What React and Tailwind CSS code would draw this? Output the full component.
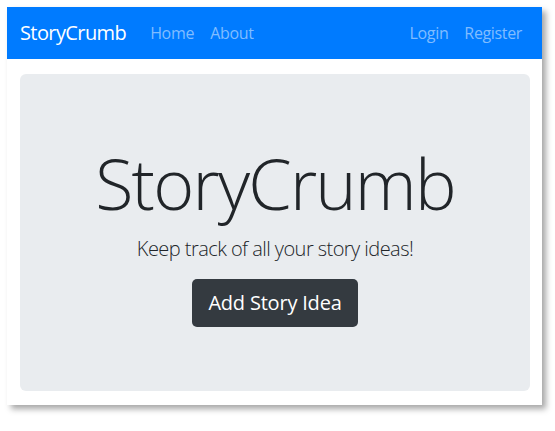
import React from 'react'

const App = () => {
    return (
        <div className="min-h-screen bg-white p-[7px]" style={{ fontFamily: '"Open Sans", "Noto Sans", sans-serif' }}>
            <div className="w-[535px] h-[398px] bg-white shadow-[4px_4px_6px_rgba(0,0,0,0.35)]">
                {/* Navbar */}
                <nav className="h-[52px] bg-[#007bff] flex items-center pl-[13px] pr-[20px]">
                    <a href="#" className="text-white text-[20px] leading-none tracking-[-0.6px]">StoryCrumb</a>
                    <div className="ml-6 flex gap-4 text-[16px] text-[#80bdff] tracking-[-0.3px]">
                        <a href="#">Home</a>
                        <a href="#">About</a>
                    </div>
                    <div className="ml-auto flex gap-4 text-[16px] text-[#80bdff] tracking-[-0.35px]">
                        <a href="#">Login</a>
                        <a href="#">Register</a>
                    </div>
                </nav>

                {/* Jumbotron */}
                <div className="pl-[13px] pr-[12px] pt-[15px]">
                    <div className="h-[317px] rounded-md bg-[#e9ecef] flex flex-col items-center pt-[66px] text-[#212529]">
                        <h1 className="text-[70px] font-light leading-[86px] mb-2 tracking-[-1.8px]">StoryCrumb</h1>
                        <p className="text-[20px] font-light leading-[30px] mb-[15px] tracking-[-0.55px]">Keep track of all your story ideas!</p>
                        <button className="h-12 px-4 rounded-[5px] bg-[#343a40] text-white text-[20px] tracking-[-0.2px]">Add Story Idea</button>
                    </div>
                </div>
            </div>
        </div>
    )
}

export default App
